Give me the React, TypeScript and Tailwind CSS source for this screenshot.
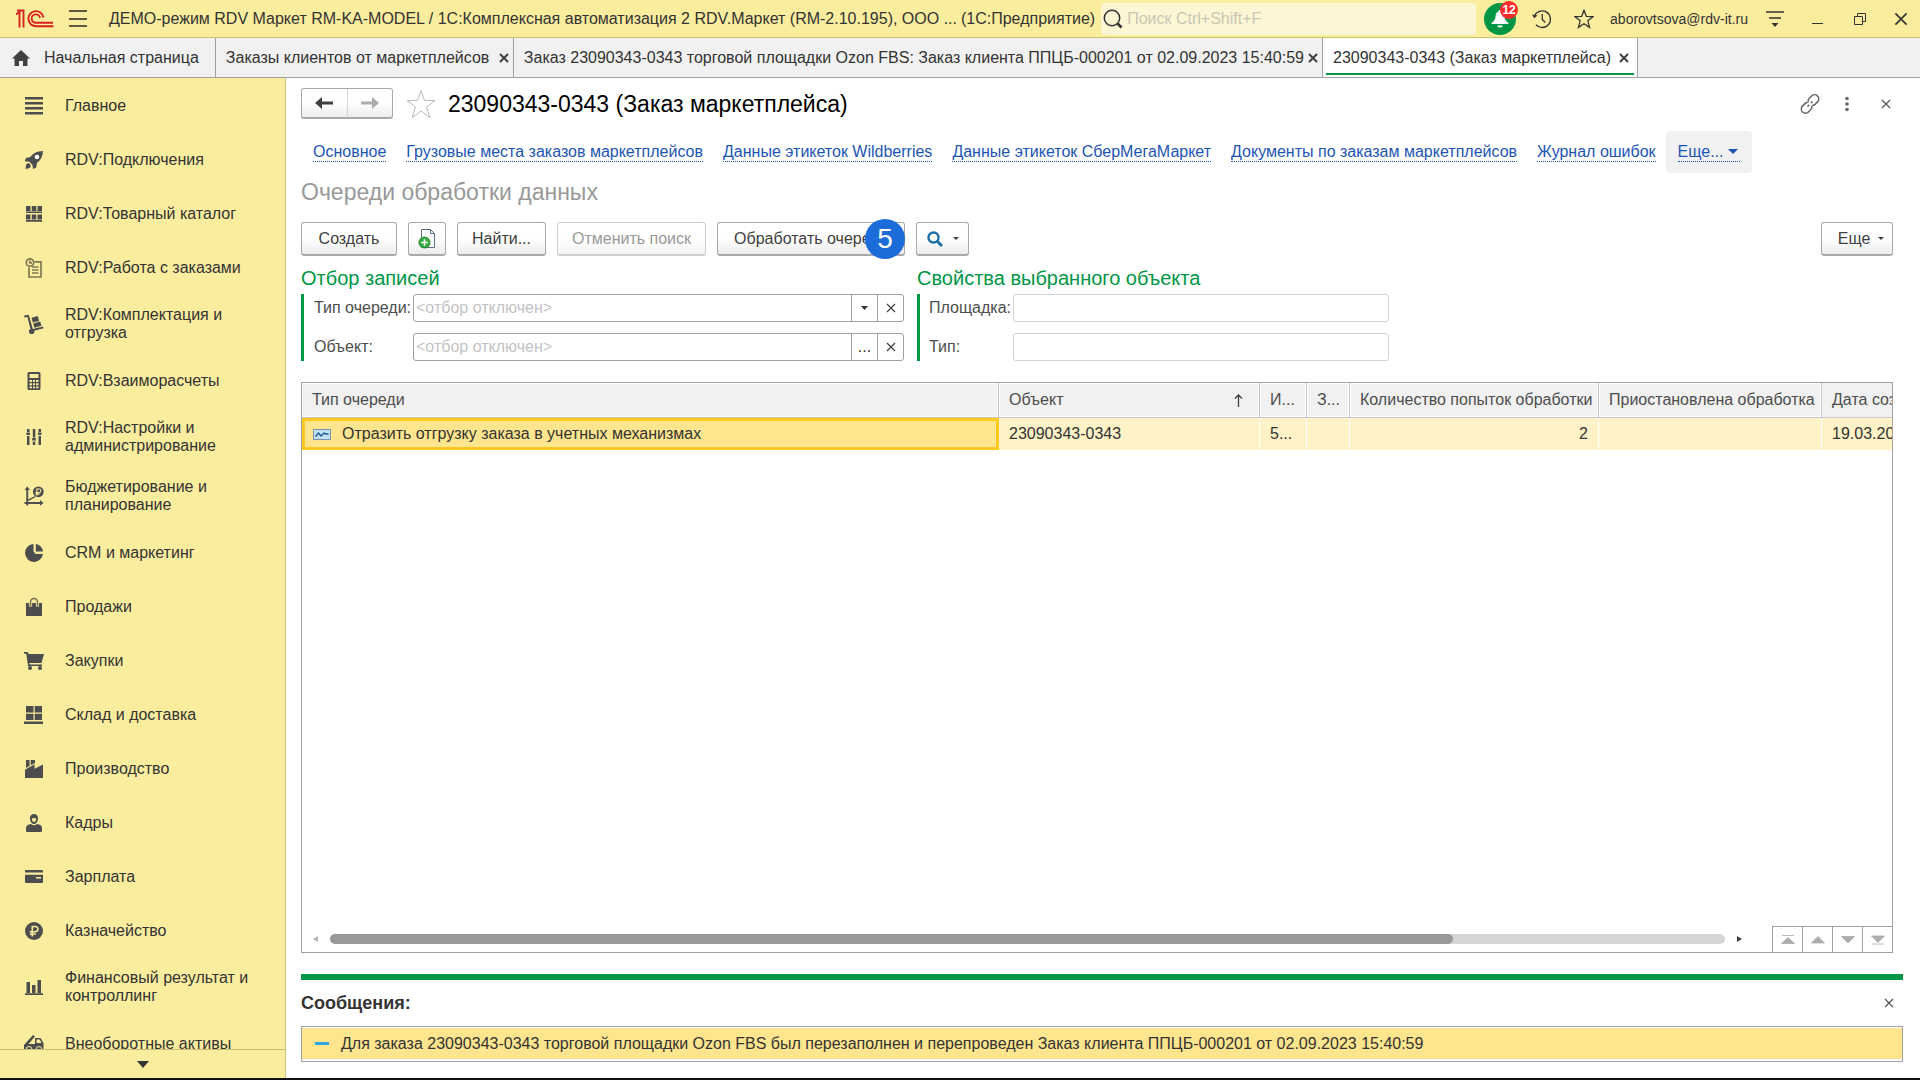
import React from "react";

const FONT = "font-['Liberation_Sans',Arial,sans-serif]";

type IconProps = { children: React.ReactNode };

function Glyph({ children }: IconProps) {
  return (
    <svg viewBox="0 0 20 20" className="size-5 shrink-0 fill-[#4d4d4d]" aria-hidden="true">
      {children}
    </svg>
  );
}

const icons = {
  main: (
    <Glyph>
      <path d="M1 1h18v2.500H1zM1 6h18v2.500H1zM1 11h18v2.500H1zM1 16h18v2.500H1z" />
    </Glyph>
  ),
  rocket: (
    <Glyph>
      <path d="M19 1c-6 .3-10.500 2.500-12.500 6L2 8 .8 11.200l4.600.6 3 3L9 19l3.200-1.400.8-4.600C17 10 18.800 6 19 1z" />
      <circle cx="13" cy="7" r="2.300" fill="#fff" />
      <path d="M3.500 13.500c1-.6 2.500.2 3 1.400.5 1.300-.2 2.700-1.600 3.300L1.500 19l.5-3.600c.1-.9.700-1.500 1.500-1.900z" />
    </Glyph>
  ),
  catalog: (
    <Glyph>
      <path d="M2 2h4.500v5H2zM7.800 2h4.500v5H7.800zM13.500 2H18v5h-4.500zM2 7.500h16V9H2zM2 10.500h4.500v5H2zM7.800 10.500h4.500v5H7.800zM13.500 10.500H18v5h-4.500zM2 16h16v1.800H2z" />
    </Glyph>
  ),
  orders: (
    <Glyph>
      <g fill="none" stroke="#7d7852" strokeWidth="1.700">
        <circle cx="6" cy="4.500" r="3.700" />
        <path d="M6 2.500v2.300h2M10.500 3.800H17V19H5v-9.500M8 9h6.500M8 12h6.500M8 15h6.500" />
      </g>
    </Glyph>
  ),
  dolly: (
    <Glyph>
      <path d="M0 1.500 4.800.8l4 14.200 10.200-2.600.6 1.900-9.300 2.500A2.700 2.700 0 1 1 6.500 15L3.400 3.100.500 3.400z" />
      <path d="m7.500 3.800 6.300-1.700 1.300 4.800-6.300 1.700zM9.200 9.400l7-1.900 1.200 4.300-7 1.900z" />
    </Glyph>
  ),
  calculator: (
    <Glyph>
      <path
        fillRule="evenodd"
        d="M5 1h10a1.500 1.500 0 0 1 1.500 1.500v15A1.500 1.500 0 0 1 15 19H5a1.500 1.500 0 0 1-1.500-1.500v-15A1.500 1.500 0 0 1 5 1zM5.500 3v4h9V3zM5.500 9v2H8V9zM9 9v2h2V9zM12 9v2h2.500V9zM5.500 12.200v2H8v-2zM9 12.200v2h2v-2zM12 12.200v2h2.500v-2zM5.500 15.400v1.800H8v-1.800zM9 15.400v1.800h2v-1.800zM12 15.400v1.800h2.500v-1.800z"
      />
    </Glyph>
  ),
  sliders: (
    <Glyph>
      <path d="M3 2h2.500v3H3zM2.500 5.500H6V8H2.500zM3 9h2.500v9H3zM8.800 2h2.500v8.500H8.800zM8.200 11h3.600v2.500H8.200zM8.800 14.500h2.500V18H8.800zM14.500 2H17v3h-2.500zM14 5.500h3.500V8H14zM14.500 9H17v9h-2.500z" />
    </Glyph>
  ),
  budget: (
    <Glyph>
      <path d="M2.300 4H.5L3.200.5 6 4H4.200v12H16v-1.900l3.500 2.800-3.500 2.800V18H4.200v1.500H2.300V18H.5v-1.900h1.800z" />
      <path d="m4 13.500 7-3.600.7 1.200L4.500 15z" />
      <circle cx="14.300" cy="5.800" r="5.400" />
      <path d="M12.800 9.500V3h2.300a1.800 1.800 0 0 1 0 3.600H11.500M11.500 8.100h4" fill="none" stroke="#fbed9e" strokeWidth="1.100" />
    </Glyph>
  ),
  pie: (
    <Glyph>
      <path d="M9.500 1A9 9 0 1 0 19 11h-7.300l-2.200-2.500z" />
      <path d="M11.800 1A8.300 8.300 0 0 1 19 8.500h-7.200z" />
    </Glyph>
  ),
  bag: (
    <Glyph>
      <path d="M2 6h16v13H2z" />
      <path d="M6.500 9.500V5a3.500 3.500 0 0 1 7 0v4.500" fill="none" stroke="#fbed9e" strokeWidth="3.200" />
      <path d="M6.500 9V5a3.500 3.500 0 0 1 7 0v4" fill="none" stroke="#77704f" strokeWidth="1.500" />
    </Glyph>
  ),
  cart: (
    <Glyph>
      <path d="M0 1h3.800l.8 2H20l-2.500 9H5.300l.3 1.500H18V15H4L2.300 2.800H0z" />
      <circle cx="6" cy="17" r="2" />
      <circle cx="16" cy="17" r="2" />
    </Glyph>
  ),
  warehouse: (
    <Glyph>
      <path d="M2 1h7.500v6.500H2zM10.700 1H18v6.500h-7.300zM2 8.700h7.500V15H2zM10.700 8.700H18V15h-7.300zM0 16.500h19V19H0z" />
    </Glyph>
  ),
  factory: (
    <Glyph>
      <path d="M2 1h3.500v6L2 9zM6.700 1H11v3L6.700 6.300z" />
      <path d="M1 10.800 10.500 5.300v4.500L19 5.500V19H1z" />
    </Glyph>
  ),
  person: (
    <Glyph>
      <path
        fillRule="evenodd"
        d="M10 1c2.600 0 4 1.700 4 4.500S12.300 11 10 11 6 8.300 6 5.500 7.400 1 10 1zM7.800 5.500C8 8 9 9 10 9s2-1 2.200-3.500c-1.500-.7-3-.7-4.400 0z"
      />
      <path d="M7 11c2 1.600 4 1.600 6 0 3 .5 5 1.500 5 4v2.500c0 1-.6 1.500-1.500 1.500h-13c-.9 0-1.500-.5-1.500-1.500V15c0-2.500 2-3.500 5-4z" />
    </Glyph>
  ),
  card: (
    <Glyph>
      <path d="M2 3h16a1 1 0 0 1 1 1v1.500H1V4a1 1 0 0 1 1-1z" />
      <path fillRule="evenodd" d="M1 7.800h18V15a1 1 0 0 1-1 1H2a1 1 0 0 1-1-1zM12 10v1.600h5V10z" />
    </Glyph>
  ),
  ruble: (
    <Glyph>
      <circle cx="10" cy="10" r="9" />
      <path d="M8.300 15.500V5.500h3a2.600 2.600 0 0 1 0 5.200H5.800M5.800 13h6" fill="none" stroke="#fbed9e" strokeWidth="1.600" />
    </Glyph>
  ),
  bars: (
    <Glyph>
      <path d="M2.500 5H6v11H2.500zM8 8h3.500v8H8zM13.500 3H17v13h-3.500zM1 16.300h18V18H1z" />
    </Glyph>
  ),
  truck: (
    <Glyph>
      <path d="M0 11 9 1l2 1.500L4.500 10H11V4h5.500l3 5v6H0z" />
      <path d="M12.500 5.500h3.300l1.800 3.500h-5.100z" fill="#fbed9e" />
      <circle cx="5" cy="15.500" r="3" stroke="#fbed9e" />
      <circle cx="15" cy="15.500" r="3" stroke="#fbed9e" />
    </Glyph>
  ),
};

const sections: { label: string; icon: React.ReactNode }[] = [
  { label: "Главное", icon: icons.main },
  { label: "RDV:Подключения", icon: icons.rocket },
  { label: "RDV:Товарный каталог", icon: icons.catalog },
  { label: "RDV:Работа с заказами", icon: icons.orders },
  { label: "RDV:Комплектация и отгрузка", icon: icons.dolly },
  { label: "RDV:Взаиморасчеты", icon: icons.calculator },
  { label: "RDV:Настройки и администрирование", icon: icons.sliders },
  { label: "Бюджетирование и планирование", icon: icons.budget },
  { label: "CRM и маркетинг", icon: icons.pie },
  { label: "Продажи", icon: icons.bag },
  { label: "Закупки", icon: icons.cart },
  { label: "Склад и доставка", icon: icons.warehouse },
  { label: "Производство", icon: icons.factory },
  { label: "Кадры", icon: icons.person },
  { label: "Зарплата", icon: icons.card },
  { label: "Казначейство", icon: icons.ruble },
  { label: "Финансовый результат и контроллинг", icon: icons.bars },
  { label: "Внеоборотные активы", icon: icons.truck },
];

function Cross({ className }: { className: string }) {
  return (
    <svg viewBox="0 0 10 10" className={className} aria-hidden="true">
      <path d="M1 1l8 8M9 1L1 9" fill="none" stroke="currentColor" strokeWidth="1.200" />
    </svg>
  );
}

function TopBar() {
  return (
    <header className="flex h-[38px] shrink-0 items-center border-b border-[#cfbf66] bg-[#fbed9e] pl-4 pr-3 text-[#333]">
      <svg viewBox="0 0 38 20" className="h-5 w-[38px] shrink-0" role="img" aria-label="1С">
        <g fill="none" stroke="#d8201f" strokeWidth="1.900">
          <path d="M0 5.500l3.500-2.500V18.500M2.500 1.500h5v17M1 1.500h3" />
          <path d="M27.500 8.500A7.600 7.600 0 1 0 20 17.300H37.500" />
          <path d="M24 9a4.200 4.200 0 1 0-4 4.800h17" />
        </g>
      </svg>
      <button type="button" aria-label="Меню" className="ml-[15px] flex h-[17px] w-[18px] shrink-0 flex-col justify-between">
        <span className="h-0.5 w-full bg-[#5f5a40]" />
        <span className="h-0.5 w-full bg-[#5f5a40]" />
        <span className="h-0.5 w-full bg-[#5f5a40]" />
      </button>
      <div className="ml-[22px] whitespace-nowrap">
        ДЕМО-режим RDV Маркет RM-KA-MODEL / 1С:Комплексная автоматизация 2 RDV.Маркет (RM-2.10.195), ООО ...
      </div>
      <div className="ml-1 whitespace-nowrap">(1С:Предприятие)</div>
      <label className="ml-1.5 flex h-8 min-w-0 flex-1 items-center gap-1 rounded-sm bg-[#fdf6d5] pl-0.5">
        <svg viewBox="0 0 20 20" className="size-5 shrink-0" aria-hidden="true">
          <circle cx="9" cy="9" r="7.700" fill="none" stroke="#333" strokeWidth="1.500" />
          <path d="M14.500 14.500l4 4" stroke="#333" strokeWidth="2.600" />
        </svg>
        <input
          type="search"
          aria-label="Поиск"
          placeholder="Поиск Ctrl+Shift+F"
          className="min-w-0 flex-1 bg-transparent outline-none placeholder:text-[#c9c6b4]"
        />
      </label>
      <div className="flex shrink-0 items-center">
        <button type="button" aria-label="Уведомления" className="relative ml-2 flex size-8 items-center justify-center rounded-full bg-[#009646]">
          <svg viewBox="0 0 20 20" className="size-5 fill-white" aria-hidden="true">
            <path d="M10 1c1 0 1.500.7 1.500 1.500 2 .8 2.800 2.500 3 5 .2 3.500 1.500 4.500 4 6.500V15h-17v-1c2.500-2 3.800-3 4-6.500.2-2.500 1-4.200 3-5C8.500 1.700 9 1 10 1zM7 16.500h6c-.5 1.300-1.600 2-3 2s-2.500-.7-3-2z" />
          </svg>
          <span className="absolute -right-0.5 -top-0.5 flex size-[18px] items-center justify-center rounded-full bg-[#fb2b2b] text-[12px] font-bold leading-none text-white">
            12
          </span>
        </button>
        <button type="button" aria-label="История" className="ml-4">
          <svg viewBox="0 0 20 20" className="size-5" fill="none" stroke="#333" strokeWidth="1.300" aria-hidden="true">
            <path d="M2.300 7.500A8.300 8.300 0 1 1 4 15.800M10.300 5v5.500l3 3" />
            <path d="M0 5.500l2.200 3.700 3.200-2.700z" fill="#333" stroke="none" />
          </svg>
        </button>
        <button type="button" aria-label="Избранное" className="ml-[22px]">
          <svg viewBox="0 0 20 20" className="size-5" fill="none" stroke="#333" strokeWidth="1.300" aria-hidden="true">
            <path d="M10 1.200l2.400 6.200 6.500.3-5.100 4.100 1.800 6.600-5.600-3.700-5.600 3.700 1.800-6.600L1.100 7.700l6.500-.3z" />
          </svg>
        </button>
        <a href="#user" className="ml-4 text-[14px]">
          aborovtsova@rdv-it.ru
        </a>
        <button type="button" aria-label="Сервис" className="ml-[18px]">
          <svg viewBox="0 0 18 18" className="size-[18px]" aria-hidden="true">
            <path d="M0 2h18M3 8h12" stroke="#333" strokeWidth="1.400" />
            <path d="M5.500 13h7L9 17z" fill="#333" />
          </svg>
        </button>
        <button type="button" aria-label="Свернуть" className="ml-7">
          <svg viewBox="0 0 12 12" className="size-3" aria-hidden="true">
            <path d="M0 10.500h11" stroke="#333" />
          </svg>
        </button>
        <button type="button" aria-label="Развернуть" className="ml-[30px]">
          <svg viewBox="0 0 12 12" className="size-3" fill="none" stroke="#333" aria-hidden="true">
            <path d="M.5 3.500h8v8h-8zM3.500 3.500v-3h8v8h-3" />
          </svg>
        </button>
        <button type="button" aria-label="Закрыть" className="ml-7">
          <Cross className="size-3.5 text-[#333]" />
        </button>
      </div>
    </header>
  );
}

const TAB = "relative flex shrink-0 items-center justify-between gap-1 border-r border-[#a0a0a0] pl-2.5";

function Tab({ label, width, active = false }: { label: string; width: string; active?: boolean }) {
  return (
    <div className={TAB + " " + width + (active ? " bg-white pr-1" : "")}>
      <button type="button" className="whitespace-nowrap">
        {label}
      </button>
      <button type="button" aria-label={"Закрыть " + label} className="mr-1">
        <svg viewBox="0 0 10 10" className="size-2.5" aria-hidden="true">
          <path d="M1 1l8 8M9 1L1 9" fill="none" stroke="#404040" strokeWidth="2" />
        </svg>
      </button>
      {active && <span className="absolute inset-x-[3px] bottom-0.5 h-0.5 bg-[#009646]" />}
    </div>
  );
}

function TabStrip() {
  return (
    <nav className="flex h-10 shrink-0 border-b border-[#a0a0a0] bg-[#f1f1f1] text-[#333]">
      <button type="button" className="flex shrink-0 items-center whitespace-nowrap border-r border-[#a0a0a0] pl-3 pr-4">
        <svg viewBox="0 0 18 16" className="mr-3.5 h-4 w-[18px]" aria-hidden="true">
          <path d="M9 0l9 8.500h-2.500V16H11v-5H7v5H2.500V8.500H0z" fill="#404040" />
        </svg>
        Начальная страница
      </button>
      <Tab label="Заказы клиентов от маркетплейсов" width="min-w-[298px]" />
      <Tab
        label="Заказ 23090343-0343 торговой площадки Ozon FBS: Заказ клиента ППЦБ-000201 от 02.09.2023 15:40:59"
        width="min-w-[298px]"
      />
      <Tab label="23090343-0343 (Заказ маркетплейса)" width="min-w-[315px]" active />
    </nav>
  );
}

function Sidebar() {
  return (
    <aside className="flex w-[286px] shrink-0 flex-col border-r border-[#cdc37e] bg-[#fbed9e] text-[#333]">
      <nav className="min-h-0 flex-1 overflow-hidden">
        {sections.map((s) => (
          <a key={s.label} href="#section" className="flex min-h-[54px] items-center pb-[11px] pl-6 pr-9 pt-3 leading-[18px]">
            {s.icon}
            <span className="ml-[21px]">{s.label}</span>
          </a>
        ))}
      </nav>
      <button type="button" aria-label="Прокрутить вниз" className="flex h-[29px] shrink-0 items-center justify-center border-t border-[#c9bd74]">
        <svg viewBox="0 0 12 7" className="h-[7px] w-3" aria-hidden="true">
          <path d="M0 0h12L6 7z" fill="#333" />
        </svg>
      </button>
    </aside>
  );
}

const links = [
  "Основное",
  "Грузовые места заказов маркетплейсов",
  "Данные этикеток Wildberries",
  "Данные этикеток СберМегаМаркет",
  "Документы по заказам маркетплейсов",
  "Журнал ошибок",
];

function Caret({ className }: { className: string }) {
  return (
    <svg viewBox="0 0 8 4" preserveAspectRatio="none" className={className} aria-hidden="true">
      <path d="M0 0h8L4 4z" fill="currentColor" />
    </svg>
  );
}

const BTN =
  "flex h-[34px] items-center justify-center whitespace-nowrap rounded-[3px] border border-b-2 border-[#a9a9a9] bg-linear-to-b from-white from-50% to-[#ececec] text-[#404040]";

function PageHeader() {
  return (
    <div className="flex items-center pr-0.5 pt-2.5">
      <div className="flex h-[31px] w-[92px] rounded-[3px] border border-b-2 border-[#a9a9a9] bg-linear-to-b from-white from-50% to-[#ececec]">
        <button type="button" aria-label="Назад" className="flex flex-1 items-center justify-center border-r border-[#d5d5d5]">
          <svg viewBox="0 0 18 12" className="h-3 w-[18px]" aria-hidden="true">
            <path d="M0 6l7-6v4.500h11v3H7V12z" fill="#404040" />
          </svg>
        </button>
        <button type="button" aria-label="Вперед" className="flex flex-1 items-center justify-center">
          <svg viewBox="0 0 18 12" className="h-3 w-[18px]" aria-hidden="true">
            <path d="M18 6l-7-6v4.500H0v3h11V12z" fill="#acacac" />
          </svg>
        </button>
      </div>
      <button type="button" aria-label="В избранное" className="ml-[13px]">
        <svg viewBox="0 0 30 30" className="size-[30px]" aria-hidden="true">
          <path d="M15 1.500l3.500 10H29l-8.500 6.500 3.300 10.500-8.800-6.500-8.800 6.500L9.500 18 1 11.500h10.500z" fill="#fff" stroke="#b5b9bd" />
        </svg>
      </button>
      <h1 className="ml-3 flex-1 text-[23px] leading-7 text-black">23090343-0343 (Заказ маркетплейса)</h1>
      <button type="button" aria-label="Ссылка">
        <svg viewBox="0 0 20 20" className="size-5" fill="none" stroke="#666" strokeWidth="1.500" aria-hidden="true">
          <path d="M8.300 8.300c-.5-1.500-.2-2.800.8-3.800l2.500-2.500a4 4 0 0 1 5.900 5.900L15 10.400c-.8.8-1.700 1.100-2.700 1" />
          <path d="M11.700 11.700c.5 1.500.2 2.800-.8 3.800L8.400 18a4 4 0 0 1-5.900-5.900L5 9.600c.8-.8 1.700-1.100 2.700-1" />
          <path d="M7.500 12.500l1.600-1.600M10.900 9.100l1.600-1.600" />
        </svg>
      </button>
      <button type="button" aria-label="Действия" className="ml-[25px]">
        <svg viewBox="0 0 4 16" className="h-4 w-1 fill-[#666]" aria-hidden="true">
          <circle cx="2" cy="2.500" r="1.800" />
          <circle cx="2" cy="8" r="1.800" />
          <circle cx="2" cy="13.500" r="1.800" />
        </svg>
      </button>
      <button type="button" aria-label="Закрыть форму" className="ml-8">
        <Cross className="size-2.5 text-[#555]" />
      </button>
    </div>
  );
}

function LinkRow() {
  return (
    <nav className="mt-3 flex items-center pl-3 text-[#1d55b5]">
      {links.map((l) => (
        <a key={l} href="#link" className="mr-5 whitespace-nowrap border-b border-dotted border-[#1d55b5] leading-[18px]">
          {l}
        </a>
      ))}
      <button type="button" className="-ml-2.5 flex h-[42px] items-center rounded bg-[#f1f1f1] px-3">
        <span className="flex items-center gap-1 whitespace-nowrap border-b border-dotted border-[#1d55b5] pr-0.5 leading-[18px]">
          Еще...
          <Caret className="h-[5px] w-2.5" />
        </span>
      </button>
    </nav>
  );
}

function Toolbar() {
  return (
    <div className="mt-4 flex gap-[11px]">
      <button type="button" className={BTN + " w-24"}>
        Создать
      </button>
      <button type="button" aria-label="Скопировать" className={BTN + " w-[38px]"}>
        <svg viewBox="0 0 18 20" className="h-5 w-[18px]" aria-hidden="true">
          <path d="M3.500.5h9l4 4v14h-13z" fill="#fff" stroke="#5d7186" />
          <path d="M12.500.5v4h4" fill="none" stroke="#5d7186" />
          <circle cx="6.500" cy="13.500" r="5.500" fill="#36a93f" stroke="#1e8a2b" />
          <path d="M6.500 10.200v6.600M3.200 13.500h6.600" stroke="#fff" strokeWidth="1.600" />
        </svg>
      </button>
      <button type="button" className={BTN + " w-[89px]"}>
        Найти...
      </button>
      <button
        type="button"
        disabled
        className="flex h-[34px] w-[149px] items-center justify-center whitespace-nowrap rounded-[3px] border border-b-2 border-[#cfcfcf] bg-linear-to-b from-white from-50% to-[#f3f3f3] text-[#999]"
      >
        Отменить поиск
      </button>
      <div className="relative">
        <button type="button" className={BTN + " w-[188px]"}>
          Обработать очередь
        </button>
        <span className="absolute -top-[3px] right-0 flex size-10 items-center justify-center rounded-full bg-[#1b6bd8] text-[28px] leading-none text-white">
          5
        </span>
      </div>
      <button type="button" aria-label="Поиск по списку" className={BTN + " w-[53px] gap-2.5"}>
        <svg viewBox="0 0 16 16" className="size-4" aria-hidden="true">
          <circle cx="6.500" cy="6.500" r="5" fill="none" stroke="#1f6ea8" strokeWidth="2.400" />
          <path d="M10 10l5 5" stroke="#1f6ea8" strokeWidth="3" />
        </svg>
        <Caret className="h-[3px] w-1.5" />
      </button>
      <button type="button" className={BTN + " ml-auto w-[72px] gap-2 pl-2"}>
        Еще
        <Caret className="h-[3px] w-1.5" />
      </button>
    </div>
  );
}

function FilterField({ id, label, picker }: { id: string; label: string; picker: "list" | "dialog" }) {
  return (
    <div className="flex items-center">
      <label htmlFor={id} className="w-[99px] shrink-0 whitespace-nowrap">
        {label}
      </label>
      <div className="flex h-7 min-w-0 flex-1 rounded-[3px] border border-[#a0a0a0] bg-white">
        <input id={id} placeholder="<отбор отключен>" className="min-w-0 flex-1 px-0.5 outline-none placeholder:text-[#c3c3c3]" />
        <button type="button" aria-label="Выбрать" className="flex w-[26px] items-center justify-center border-l border-[#a0a0a0] text-[#333]">
          {picker === "list" ? <Caret className="h-1 w-[7px]" /> : "..."}
        </button>
        <button type="button" aria-label="Очистить" className="flex w-[26px] items-center justify-center border-l border-[#a0a0a0] text-[#404040]">
          <Cross className="size-2.5" />
        </button>
      </div>
    </div>
  );
}

function PlainField({ id, label }: { id: string; label: string }) {
  return (
    <div className="flex items-center">
      <label htmlFor={id} className="w-[84px] shrink-0 whitespace-nowrap">
        {label}
      </label>
      <input id={id} readOnly className="h-7 min-w-0 flex-1 rounded-[3px] border border-[#d2d2d2] bg-white px-1 outline-none" />
    </div>
  );
}

function Filters() {
  return (
    <div className="mt-2 flex gap-[13px] text-[#4d4d4d]">
      <section className="w-[603px]">
        <h2 className="pb-0.5 text-[20px] leading-7 text-[#009646]">Отбор записей</h2>
        <div className="flex flex-col gap-[11px] border-l-[3px] border-[#009646] pl-2.5">
          <FilterField id="queue-type" label="Тип очереди:" picker="list" />
          <FilterField id="object" label="Объект:" picker="dialog" />
        </div>
      </section>
      <section className="w-[472px]">
        <h2 className="pb-0.5 text-[20px] leading-7 text-[#009646]">Свойства выбранного объекта</h2>
        <div className="flex flex-col gap-[11px] border-l-[3px] border-[#009646] pl-[9px]">
          <PlainField id="place" label="Площадка:" />
          <PlainField id="kind" label="Тип:" />
        </div>
      </section>
    </div>
  );
}

const TH = "overflow-hidden whitespace-nowrap border-b border-r border-[#c6c6c6] px-2.5 text-left font-normal shadow-[inset_0_0_0_1px_#fff]";
const TD = "overflow-hidden whitespace-nowrap border-r border-white px-2.5";

function QueueTable() {
  return (
    <div className="mt-[21px] flex min-h-0 flex-1 flex-col border border-[#a0a0a0]">
      <div className="min-h-0 flex-1 overflow-hidden">
        <table className="w-full table-fixed border-separate border-spacing-0 text-[#333]">
          <colgroup>
            <col />
            <col className="w-[261px]" />
            <col className="w-[47px]" />
            <col className="w-[43px]" />
            <col className="w-[249px]" />
            <col className="w-[223px]" />
            <col className="w-[70px]" />
          </colgroup>
          <thead>
            <tr className="h-[35px] bg-[#f1f1f1] text-[#4d4d4d]">
              <th className={TH}>Тип очереди</th>
              <th className={TH}>
                <span className="flex items-center justify-between pr-1.5">
                  Объект
                  <svg viewBox="0 0 9 13" className="h-[13px] w-[9px]" fill="none" stroke="#404040" strokeWidth="1.300" aria-hidden="true">
                    <path d="M4.500 13V1M1 4.500L4.500 1 8 4.500" />
                  </svg>
                </span>
              </th>
              <th className={TH}>И...</th>
              <th className={TH}>З...</th>
              <th className={TH}>Количество попыток обработки</th>
              <th className={TH}>Приостановлена обработка</th>
              <th className="overflow-hidden whitespace-nowrap border-b border-[#c6c6c6] pl-2.5 text-left font-normal">Дата создания</th>
            </tr>
          </thead>
          <tbody>
            <tr className="h-8 bg-[#fef2c6]">
              <td className="border-[3px] border-[#fbc91f] bg-[#ffe58e] pl-2">
                <span className="flex items-center gap-[11px]">
                  <svg viewBox="0 0 18 11" className="h-[11px] w-[18px]" aria-hidden="true">
                    <rect x=".5" y=".5" width="17" height="10" fill="#c3e0f5" stroke="#7693ad" />
                    <path d="M2.500 7.500l3-3.500 2.500 3L11 4l2 1h2.500" fill="none" stroke="#1a5a9c" strokeWidth="1.400" />
                  </svg>
                  Отразить отгрузку заказа в учетных механизмах
                </span>
              </td>
              <td className={TD}>23090343-0343</td>
              <td className={TD}>5...</td>
              <td className={TD} />
              <td className={TD + " text-right"}>2</td>
              <td className={TD} />
              <td className="overflow-hidden whitespace-nowrap pl-2.5">19.03.2024</td>
            </tr>
          </tbody>
        </table>
      </div>
      <div className="flex h-[26px] shrink-0 items-center pl-[11px]">
        <svg viewBox="0 0 5 6" className="h-1.5 w-[5px]" aria-hidden="true">
          <path d="M5 0v6L0 3z" fill="#b5b5b5" />
        </svg>
        <div className="ml-3 h-2.5 flex-1 rounded-full bg-[#d5d5d5]">
          <div className="h-full w-[80.5%] rounded-full bg-[#999]" />
        </div>
        <svg viewBox="0 0 5 6" className="ml-3 h-1.5 w-[5px]" aria-hidden="true">
          <path d="M0 0v6l5-3z" fill="#404040" />
        </svg>
        <div className="ml-[30px] flex h-full border-t border-[#a0a0a0]">
          {["M1 .5h12M7 2.500l6.500 6H.5z", "M7 1.500l6.500 6.500H.5z", "M7 8L.5 1.500h13z", "M1 9h12M7 7.500L.5 1h13z"].map((d, i) => (
            <button key={d} type="button" aria-label={"Переход " + (i + 1)} className="flex w-[30px] items-center justify-center border-l border-[#a0a0a0]">
              <svg viewBox="0 0 14 10" className="h-2.5 w-3.5" aria-hidden="true">
                <path d={d} fill="#acacac" stroke="#acacac" strokeWidth=".8" />
              </svg>
            </button>
          ))}
        </div>
      </div>
    </div>
  );
}

function Messages() {
  return (
    <section className="mr-[17px] mt-[21px] shrink-0 border-t-[6px] border-[#009646]">
      <div className="flex h-[46px] items-center justify-between pr-[9px]">
        <h2 className="text-[18px] font-bold text-[#333]">Сообщения:</h2>
        <button type="button" aria-label="Закрыть сообщения">
          <Cross className="size-2.5 text-[#555]" />
        </button>
      </div>
      <div className="border border-[#a0a0a0] pb-0.5 pt-px">
        <div className="flex h-[31px] items-center bg-[#ffe58e] pl-[13px] text-[#333]">
          <span className="mr-3 h-[3px] w-3.5 bg-[#2fa6dc]" />
          Для заказа 23090343-0343 торговой площадки Ozon FBS был перезаполнен и перепроведен Заказ клиента ППЦБ-000201 от 02.09.2023 15:40:59
        </div>
      </div>
    </section>
  );
}

export default function App() {
  return (
    <div className={FONT + " flex h-screen flex-col overflow-hidden border-b-2 border-[#101014] bg-white text-[16px] leading-5"}>
      <TopBar />
      <TabStrip />
      <div className="flex min-h-0 flex-1">
        <Sidebar />
        <main className="flex min-w-0 flex-1 flex-col pb-4 pl-[15px]">
          <div className="flex min-h-0 flex-1 flex-col pr-[27px]">
            <PageHeader />
            <LinkRow />
            <h2 className="mt-[5px] text-[23px] leading-7 text-[#999]">Очереди обработки данных</h2>
            <Toolbar />
            <Filters />
            <QueueTable />
          </div>
          <Messages />
        </main>
      </div>
    </div>
  );
}
